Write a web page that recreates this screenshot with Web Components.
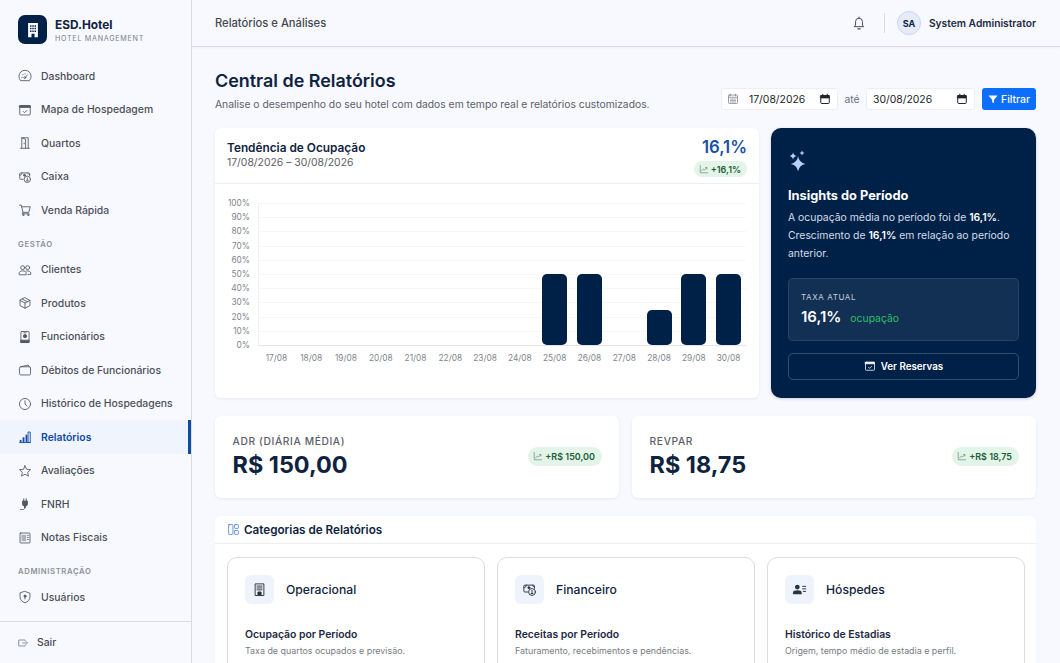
<!DOCTYPE html>
<html lang="pt-BR">
<head>
<meta charset="utf-8">
<title>ESD.Hotel - Relatórios</title>
<style>
  html, body { margin: 0; height: 100%; overflow: hidden; }
  body { font-family: Inter, "Liberation Sans", sans-serif; background: #f8f9ff; color: #0f2340; }
</style>
</head>
<body>
<app-shell>
  <app-sidebar slot="side">
    <nav-item icon="speed">Dashboard</nav-item>
    <nav-item icon="event">Mapa de Hospedagem</nav-item>
    <nav-item icon="door">Quartos</nav-item>
    <nav-item icon="cash">Caixa</nav-item>
    <nav-item icon="cart">Venda Rápida</nav-item>
    <nav-label>GESTÃO</nav-label>
    <nav-item icon="group">Clientes</nav-item>
    <nav-item icon="box">Produtos</nav-item>
    <nav-item icon="badge">Funcionários</nav-item>
    <nav-item icon="folder">Débitos de Funcionários</nav-item>
    <nav-item icon="clock">Histórico de Hospedagens</nav-item>
    <nav-item icon="bars" active>Relatórios</nav-item>
    <nav-item icon="star">Avaliações</nav-item>
    <nav-item icon="plug">FNRH</nav-item>
    <nav-item icon="news">Notas Fiscais</nav-item>
    <nav-label>ADMINISTRAÇÃO</nav-label>
    <nav-item icon="shield">Usuários</nav-item>
  </app-sidebar>
  <app-topbar slot="top"></app-topbar>
  <page-heading></page-heading>
  <section class="row" style="display:grid;grid-template-columns:1fr 265px;gap:12px;height:270px;margin-top:18px">
    <occupancy-chart></occupancy-chart>
    <insight-card></insight-card>
  </section>
  <section class="row" style="display:grid;grid-template-columns:404px 404px;gap:13px;height:82px;margin-top:18px">
    <stat-card label="ADR (DIÁRIA MÉDIA)" value="R$ 150,00" trend="+R$ 150,00"></stat-card>
    <stat-card label="REVPAR" value="R$ 18,75" trend="+R$ 18,75"></stat-card>
  </section>
  <report-categories>
    <category-card icon="building" title="Operacional" item="Ocupação por Período" desc="Taxa de quartos ocupados e previsão."></category-card>
    <category-card icon="cash" title="Financeiro" item="Receitas por Período" desc="Faturamento, recebimentos e pendências."></category-card>
    <category-card icon="guest" title="Hóspedes" item="Histórico de Estadias" desc="Origem, tempo médio de estadia e perfil."></category-card>
  </report-categories>
</app-shell>

<script>
const ICONS = {
  speed: '<path d="M4 19.500a10.500 10.500 0 1 1 16 0z"/><path d="M12.800 13.600l3.400-3"/><circle cx="11.600" cy="14.800" r="1.600"/><path d="M6.800 14.500h.5M8.300 9.800h.5M12 8v.5"/>',
  event: '<rect x="3" y="4.500" width="18" height="16" rx="1.500"/><path d="M3 4.500h18v3H3z" fill="currentColor"/><path d="M9 14.500l2.200 2.200 4-4"/>',
  door: '<path d="M4.500 21h15M6.500 21V3h11v18"/><path d="M6.500 3l6.500 2.500V21"/><path d="M10.500 12v1.500"/>',
  cash: '<path d="M9 16H4.500A1.500 1.500 0 0 1 3 14.500v-8A1.500 1.500 0 0 1 4.500 5h14A1.500 1.500 0 0 1 20 6.500V10"/><path d="M3 9c2.500 0 4-1.500 4-4M20 8c-1.500 0-3-1-3-3" /><circle cx="11" cy="9" r="1.600" fill="currentColor"/><circle cx="16" cy="16" r="5.500"/><path d="M16 13.500v5M14.500 18.500h3"/>',
  cart: '<path d="M2.500 3.500h3l3 12.500h10l2.500-9.500H6.500"/><path d="M8.500 16l-1.500 2.500h12"/><circle cx="9" cy="20.500" r="1.200"/><circle cx="17.500" cy="20.500" r="1.200"/>',
  group: '<circle cx="8" cy="8" r="3.400"/><circle cx="16.500" cy="8" r="3.400"/><path d="M2 19.500v-2c0-2.500 2.500-4 6-4s6 1.500 6 4v2zM14 13.600c4-.6 8 .9 8 3.900v2h-5"/>',
  box: '<path d="M12 3l8.500 4.500v9L12 21l-8.500-4.500v-9z"/><path d="M3.500 7.500L12 12l8.500-4.500M12 12v9M7.500 5.300l8.500 4.500"/>',
  badge: '<rect x="5" y="2.500" width="14" height="19" rx="1"/><path d="M5 17.500h14v4H5z" fill="currentColor"/><circle cx="12" cy="10.500" r="2.800" fill="currentColor"/><path d="M10 4.800h4"/>',
  folder: '<path d="M2.500 8.500A2 2 0 0 1 4.500 6.500h15a2 2 0 0 1 2 2v10a2 2 0 0 1-2 2h-15a2 2 0 0 1-2-2z"/><path d="M4.500 6.500l13-3 2 3"/>',
  clock: '<circle cx="12" cy="12" r="9.500"/><path d="M12 6.500V12l3.800 3.600"/>',
  bars: '<g fill="currentColor" stroke="none"><rect x="3" y="17" width="3" height="4.500"/><rect x="8" y="12.500" width="3" height="9"/><rect x="13" y="8" width="3" height="13.500"/></g><path d="M18 3.500h3v18h-3z" /><path d="M3 21.500h18"/>',
  star: '<path d="M12 3l2.800 6 6.700.8-4.900 4.500 1.300 6.500L12 17.500 6.100 20.800l1.300-6.500L2.500 9.800 9.200 9z"/>',
  plug: '<path fill="currentColor" stroke="none" d="M9 2.500h1.800v4h2.400v-4H15v4h2v5.500c0 2-1.500 3.500-3.500 3.800V19h-3.200v-3.200C8.500 15.500 7 14 7 12V6.500h2z"/><path d="M11.800 18.500c0 2-1.500 3-3.500 3H4.500"/>',
  news: '<rect x="3.500" y="3.500" width="17" height="17" rx="1"/><rect x="6" y="6.500" width="8" height="11" fill="currentColor" fill-opacity=".45" stroke="none"/><path d="M16 7.500h2M16 11h2M16 14.500h2" stroke-width="1.200"/>',
  shield: '<path d="M12 2.500l8.500 3v6c0 5-3.500 8.800-8.500 10.500-5-1.700-8.500-5.500-8.500-10.500v-6z"/><circle cx="12" cy="10.500" r="1.800" fill="currentColor"/><path d="M12 11.500v4"/>',
  logout: '<path d="M15 6H3.500v12H15"/><path d="M15 6l6 6-6 6"/><path d="M11 12h7"/>',
  bell: '<path d="M5 17.500h14l-1.800-2.500V10a5.200 5.200 0 0 0-10.400 0v5z"/><path d="M12 3v1.500"/><path d="M10.300 20.800h3.400" stroke-width="2"/>',
  calendar: '<rect x="3.500" y="5" width="17" height="16" rx="1.500" stroke-width="2"/><path d="M3.500 5h17v5h-17z" fill="currentColor"/><path d="M7.500 2.500V5M16.500 2.500V5" stroke-width="2"/>',
  calgrid: '<rect x="3" y="4" width="18" height="17" rx="1.500"/><path d="M3 8.500h18M7 2.500v3M17 2.500v3M7 12h2M11 12h2M15 12h2M7 15h2M11 15h2M15 15h2M7 18h2M11 18h2M15 18h2"/>',
  funnel: '<path fill="currentColor" stroke="none" d="M2.500 3.500h19a.8.8 0 0 1 .6 1.300L14.500 14v6.500a1 1 0 0 1-1.500.900l-2.500-1.500a1 1 0 0 1-.5-.900V14L1.900 4.800a.8.8 0 0 1 .6-1.300z"/>',
  trend: '<path d="M3 3.500V21h18"/><path d="M6.500 16.500l4-4.500 3 2.500 5-5.500"/><path d="M15.500 8.500h3.500V12"/>',
  sparkle: '<g fill="currentColor" stroke="none"><path d="M11 8Q12.200 15.200 19 16.400 12.200 17.600 11 24.500 9.800 17.600 3 16.400 9.800 15.200 11 8z"/><path d="M5.500 3.600Q6 7.100 9.400 7.600 6 8.100 5.500 11.600 5 8.100 1.600 7.600 5 7.100 5.500 3.600z"/><path d="M15.300 1.600Q15.700 4 18 4.400 15.700 4.800 15.300 7.200 14.900 4.800 12.600 4.400 14.900 4 15.300 1.600z"/></g>',
  panels: '<rect x="3" y="3" width="8" height="18" rx="1"/><rect x="14" y="3" width="7" height="7" rx="1"/><rect x="14" y="14" width="7" height="7" rx="1"/>',
  building: '<path d="M5 21V3h14v18z"/><path d="M8 6.500h2M11 6.500h2M14 6.500h2M8 9.500h2M11 9.500h2M14 9.500h2M8 12.500h2M11 12.500h2M14 12.500h2"/><path d="M9.500 21v-5h5v5" fill="currentColor"/>',
  guest: '<circle cx="8.500" cy="8" r="3.800" fill="currentColor" stroke="none"/><path fill="currentColor" stroke="none" d="M1.500 19.500V17c0-2.500 3-3.800 7-3.800s7 1.300 7 3.800v2.500z"/><path d="M17 7h5M17 11h5M18 15h4"/>',
  logo: '<path fill="currentColor" stroke="none" fill-rule="evenodd" d="M5.500 2.500h13v19h-4.500v-4.500h-4V21.500H5.500zM8 5.500v2h2v-2zM11 5.500v2h2v-2zM14 5.500v2h2v-2zM8 9v2h2V9zM11 9v2h2V9zM14 9v2h2V9zM8 12.500v2h2v-2zM11 12.500v2h2v-2zM14 12.500v2h2v-2z"/>'
};

class AppIcon extends HTMLElement {
  connectedCallback() {
    const size = this.getAttribute("size") || 16;
    const stroke = this.getAttribute("stroke") || 1.5;
    this.attachShadow({ mode: "open" }).innerHTML = `
      <style>:host{display:inline-flex;flex:none} svg{display:block}</style>
      <svg width="${size}" height="${size}" viewBox="0 0 24 24" fill="none" stroke="currentColor"
        stroke-width="${stroke}" stroke-linecap="round" stroke-linejoin="round">${ICONS[this.getAttribute("name")] || ""}</svg>`;
  }
}

class AppShell extends HTMLElement {
  constructor() {
    super();
    this.attachShadow({ mode: "open" }).innerHTML = `
    <style>
      :host{display:grid;grid-template-columns:192px 1fr;height:663px;overflow:hidden}
      main{display:flex;flex-direction:column;min-width:0;height:663px;overflow:hidden}
      #content{padding:0 24px 0 23px;display:flex;flex-direction:column}
    </style>
    <slot name="side"></slot>
    <main>
      <slot name="top"></slot>
      <div id="content"><slot></slot></div>
    </main>`;
  }
}

class AppSidebar extends HTMLElement {
  constructor() {
    super();
    this.attachShadow({ mode: "open" }).innerHTML = `
    <style>
      :host{display:flex;flex-direction:column;height:663px;background:#f8f9ff;border-right:1px solid #d9dce3;box-sizing:border-box}
      #brand{height:59.25px;flex:none;display:flex;align-items:flex-start;gap:8px;padding:15px 0 0 18px;box-sizing:border-box}
      #logo{width:29px;height:29px;border-radius:7px;background:#002147;color:#fff;display:flex;align-items:center;justify-content:center}
      b{display:block;font-size:11.84px;font-weight:700;color:#0f2340;line-height:16px;margin-top:2px}
      small{display:block;font-size:7.2px;letter-spacing:.7px;color:#7b818c;line-height:10px;margin-top:1px}
      nav{flex:1;min-height:0;overflow:hidden}
      footer{height:42px;flex:none;border-top:1px solid #d9dce3;display:flex;align-items:center;gap:8px;padding-left:17px;box-sizing:border-box;font-size:10.4px;font-weight:500;color:#43474e}
      footer app-icon{color:#6f747d}
    </style>
    <div id="brand">
      <div id="logo"><app-icon name="logo" size="18"></app-icon></div>
      <div><b>ESD.Hotel</b><small>HOTEL MANAGEMENT</small></div>
    </div>
    <nav><slot></slot></nav>
    <footer><app-icon name="logout" size="12"></app-icon>Sair</footer>`;
  }
}

class NavItem extends HTMLElement {
  connectedCallback() {
    this.attachShadow({ mode: "open" }).innerHTML = `
    <style>
      :host{display:flex;align-items:center;gap:9px;height:33.5px;padding-left:18px;box-sizing:border-box;font-size:10.4px;font-weight:500;color:#4b4f57;position:relative}
      :host([active]){background:#f0f4fd;color:#0f4ba6;font-weight:600;border-right:3px solid #0f4ba6}
      app-icon{color:#555a62;width:14px;justify-content:center}
      :host([active]) app-icon{color:#0f4ba6}
    </style>
    <app-icon name="${this.getAttribute("icon")}" size="14"></app-icon><slot></slot>`;
  }
}

class NavLabel extends HTMLElement {
  constructor() {
    super();
    this.attachShadow({ mode: "open" }).innerHTML = `
    <style>:host{display:flex;align-items:center;height:26px;padding:9px 0 0 18px;box-sizing:border-box;font-size:7.7px;font-weight:600;letter-spacing:.62px;color:#8b9099}</style>
    <slot></slot>`;
  }
}

class AppTopbar extends HTMLElement {
  constructor() {
    super();
    this.attachShadow({ mode: "open" }).innerHTML = `
    <style>
      :host{display:flex;align-items:center;height:47px;flex:none;box-sizing:border-box;padding:0 24px 0 23px;background:#f8f9ff;border-bottom:1px solid #d9dce3;box-shadow:0 1px 2px rgba(0,0,0,.04)}
      h2{flex:1;margin:0;font-size:11.2px;font-weight:500;color:#43474e}
      app-icon{color:#4b4f57;margin-right:17px}
      i{width:1px;height:20px;background:#d9dce3;margin-right:12px}
      #avatar{width:24px;height:24px;box-sizing:border-box;border-radius:50%;background:#e5ebfa;border:1px solid #cbd5ec;display:flex;align-items:center;justify-content:center;font-size:9px;font-weight:700;color:#0f2340;margin-right:8px}
      span{font-size:10.24px;font-weight:600;color:#1d2a3f}
    </style>
    <h2>Relatórios e Análises</h2>
    <app-icon name="bell" size="16"></app-icon><i></i>
    <div id="avatar">SA</div><span>System Administrator</span>`;
  }
}

class DateField extends HTMLElement {
  connectedCallback() {
    const lead = this.hasAttribute("lead");
    this.attachShadow({ mode: "open" }).innerHTML = `
    <style>
      :host{display:flex;align-items:center;height:22px;box-sizing:border-box;background:#fff;border:1px solid #eceef3;border-radius:3px;padding:0 6px 0 ${lead ? 5 : 6}px;font-size:10.4px;color:#212529}
      #lead{color:#7d8289;margin-right:10px}
      span{flex:1}
    </style>
    ${lead ? '<app-icon id="lead" name="calgrid" size="12"></app-icon>' : ""}
    <span>${this.getAttribute("value")}</span>
    <app-icon name="calendar" size="12" stroke="1.400"></app-icon>`;
  }
}

class PageHeading extends HTMLElement {
  constructor() {
    super();
    this.attachShadow({ mode: "open" }).innerHTML = `
    <style>
      :host{display:flex;justify-content:space-between;align-items:flex-end;height:63px;box-sizing:border-box}
      #title{margin-bottom:-1px}
      h1{margin:0;font-size:17.92px;line-height:24px;font-weight:600;color:#0f2340}
      p{margin:3px 0 0;font-size:10.32px;line-height:16px;color:#5c6068}
      #title{margin-bottom:-2px}
      #filter{display:flex;align-items:center;font-size:10.4px;color:#6d7178}
      date-field:first-child{width:117px}
      date-field:nth-child(3){width:109px}
      em{font-style:normal;width:28px;text-align:center}
      button{all:unset;box-sizing:border-box;display:flex;align-items:center;justify-content:center;gap:3px;width:54px;height:22px;margin-left:7px;background:#0d6efd;color:#fff;border-radius:3px;font-size:10.4px;font-weight:500}
    </style>
    <div id="title">
      <h1>Central de Relatórios</h1>
      <p>Analise o desempenho do seu hotel com dados em tempo real e relatórios customizados.</p>
    </div>
    <div id="filter">
      <date-field lead value="17/08/2026"></date-field>
      <em>até</em>
      <date-field value="30/08/2026"></date-field>
      <button><app-icon name="funnel" size="10"></app-icon>Filtrar</button>
    </div>`;
  }
}

class TrendPill extends HTMLElement {
  constructor() {
    super();
    this.attachShadow({ mode: "open" }).innerHTML = `
    <style>
      :host{display:inline-flex;align-items:center;gap:2px;height:var(--pill-h,16px);padding:0 var(--pill-r,6px) 0 5px;border-radius:10px;background:#e3f5e8;color:#1c5c38;font-size:9px;font-weight:600;white-space:nowrap}
      app-icon{color:#5f7f6c}
    </style>
    <app-icon name="trend" size="10"></app-icon><slot></slot>`;
  }
}

class OccupancyChart extends HTMLElement {
  constructor() {
    super();
    const days = ["17/08","18/08","19/08","20/08","21/08","22/08","23/08","24/08","25/08","26/08","27/08","28/08","29/08","30/08"];
    const values = [0,0,0,0,0,0,0,0,50,50,0,25,50,50];
    const ticks = [100,90,80,70,60,50,40,30,20,10,0];
    this.attachShadow({ mode: "open" }).innerHTML = `
    <style>
      :host{display:block;background:#fff;border-radius:6px;box-shadow:0 1px 3px rgba(15,35,64,.08);overflow:hidden}
      header{height:56px;box-sizing:border-box;border-bottom:1px solid #eceef2;padding:6px 12px 0;display:flex;justify-content:space-between}
      h3{margin:0;font-size:11.84px;line-height:16px;font-weight:600;color:#0f2340;margin-top:6px}
      small{display:block;font-size:10.4px;line-height:14px;color:#5c6068;margin-top:0}
      #total{display:flex;flex-direction:column;align-items:flex-end;gap:3px;margin-top:2px}
      strong{font-size:16.8px;line-height:22px;font-weight:600;color:#1a4fa3}
      #body{display:grid;grid-template-columns:23px 1fr;column-gap:8px;padding:19px 13px 0 12px}
      #y{display:flex;flex-direction:column;justify-content:space-between;height:142px;font-size:8.32px;color:#80858d;text-align:right}
      #y span{height:0;line-height:0;white-space:nowrap;direction:rtl}
      #plot{height:142px;display:grid;grid-template-columns:repeat(14,1fr);align-items:end;border-left:1px solid #eef0f3;border-bottom:1px solid #e3e5ea;box-sizing:content-box;
        background:repeating-linear-gradient(to bottom,#f6f7f9 0,#f6f7f9 1px,transparent 1px,transparent 14.2px)}
      #plot div{height:0;width:25px;justify-self:center;background:#002147;border-radius:5px}
      #x{grid-column:2;display:grid;grid-template-columns:repeat(14,1fr);padding-left:1px;font-size:8.32px;color:#80858d;text-align:center;margin-top:7px;line-height:11px}
    </style>
    <header>
      <div><h3>Tendência de Ocupação</h3><small>17/08/2026 – 30/08/2026</small></div>
      <div id="total"><strong>16,1%</strong><trend-pill>+16,1%</trend-pill></div>
    </header>
    <div id="body">
      <div id="y">${ticks.map(t => `<span>${t}%</span>`).join("")}</div>
      <div id="plot">${values.map(v => `<div style="height:${v}%"></div>`).join("")}</div>
      <div id="x">${days.map(d => `<span>${d}</span>`).join("")}</div>
    </div>`;
  }
}

class InsightCard extends HTMLElement {
  constructor() {
    super();
    this.attachShadow({ mode: "open" }).innerHTML = `
    <style>
      :host{display:flex;flex-direction:column;background:#002147;border-radius:10px;padding:21px 17px 18px;box-sizing:border-box;color:#fff;box-shadow:0 1px 3px rgba(15,35,64,.2)}
      #spark{color:#b8d0f8}
      h3{margin:17px 0 0;font-size:12.8px;line-height:16px;font-weight:700}
      p{margin:5px 0 0;font-size:10.4px;line-height:17.9px;color:#d5dde8}
      p span{display:block;white-space:nowrap}
      p b{color:#fff;font-weight:600}
      #rate{margin-top:15px;height:63px;box-sizing:border-box;padding:13px 12px 0;border:1px solid rgba(255,255,255,.09);border-radius:5px;background:rgba(255,255,255,.07)}
      small{display:block;font-size:8px;line-height:11px;letter-spacing:.6px;color:#c4ccd8}
      #val{display:flex;align-items:baseline;gap:9px;margin-top:3px}
      strong{font-size:15px;line-height:22px;font-weight:600}
      em{font-style:normal;font-size:10.4px;color:#2fbf64}
      #btn{margin-top:12px;height:27px;box-sizing:border-box;display:flex;align-items:center;justify-content:center;gap:5px;border:1px solid rgba(255,255,255,.2);border-radius:5px;font-size:9.76px;font-weight:600}
    </style>
    <app-icon id="spark" name="sparkle" size="22"></app-icon>
    <h3>Insights do Período</h3>
    <p><span>A ocupação média no período foi de <b>16,1%</b>.</span><span>Crescimento de <b>16,1%</b> em relação ao período</span><span>anterior.</span></p>
    <div id="rate">
      <small>TAXA ATUAL</small>
      <div id="val"><strong>16,1%</strong><em>ocupação</em></div>
    </div>
    <div id="btn"><app-icon name="event" size="12"></app-icon>Ver Reservas</div>`;
  }
}

class StatCard extends HTMLElement {
  connectedCallback() {
    this.attachShadow({ mode: "open" }).innerHTML = `
    <style>
      :host{display:flex;align-items:center;justify-content:space-between;background:#fff;border-radius:6px;padding:0 17px 0 17.6px;box-sizing:border-box;box-shadow:0 1px 3px rgba(15,35,64,.08);--pill-h:19px;--pill-r:7px}
      small{display:block;font-size:10.24px;line-height:13px;font-weight:500;letter-spacing:.62px;color:#5c6068}
      strong{display:block;margin-top:1px;font-size:23.4px;line-height:31px;font-weight:700;color:#0f2340}
      trend-pill{margin-top:-2px}
    </style>
    <div><small>${this.getAttribute("label")}</small><strong>${this.getAttribute("value")}</strong></div>
    <trend-pill>${this.getAttribute("trend")}</trend-pill>`;
  }
}

class ReportCategories extends HTMLElement {
  constructor() {
    super();
    this.attachShadow({ mode: "open" }).innerHTML = `
    <style>
      :host{display:block;margin-top:18px;background:#fff;border-radius:6px 6px 0 0}
      header{height:28px;box-sizing:border-box;display:flex;align-items:center;gap:4px;padding:0 12px;border-bottom:1px solid #eceef2;font-size:11.68px;font-weight:600;color:#0f2340}
      app-icon{color:#4d7fd6}
      #grid{display:grid;grid-template-columns:repeat(3,258px);gap:12px;padding:13px 12px}
    </style>
    <header><app-icon name="panels" size="13"></app-icon>Categorias de Relatórios</header>
    <div id="grid"><slot></slot></div>`;
  }
}

class CategoryCard extends HTMLElement {
  connectedCallback() {
    this.attachShadow({ mode: "open" }).innerHTML = `
    <style>
      :host{display:block;height:140px;box-sizing:border-box;border:1px solid #d9dce3;border-radius:10px;padding:17px}
      #head{display:flex;align-items:center;gap:12px;font-size:12.16px;font-weight:500;color:#0f2340}
      #box{width:29px;height:29px;border-radius:6px;background:#eff3fc;display:flex;align-items:center;justify-content:center;color:#2b3442}
      b{display:block;margin-top:24px;font-size:10.4px;line-height:14px;font-weight:600;color:#1d2a3f}
      small{display:block;margin-top:3px;font-size:8.88px;line-height:12px;color:#777c84}
    </style>
    <div id="head"><div id="box"><app-icon name="${this.getAttribute("icon")}" size="15"></app-icon></div>${this.getAttribute("title")}</div>
    <b>${this.getAttribute("item")}</b>
    <small>${this.getAttribute("desc")}</small>`;
  }
}

customElements.define("app-icon", AppIcon);
customElements.define("app-shell", AppShell);
customElements.define("app-sidebar", AppSidebar);
customElements.define("nav-item", NavItem);
customElements.define("nav-label", NavLabel);
customElements.define("app-topbar", AppTopbar);
customElements.define("date-field", DateField);
customElements.define("page-heading", PageHeading);
customElements.define("trend-pill", TrendPill);
customElements.define("occupancy-chart", OccupancyChart);
customElements.define("insight-card", InsightCard);
customElements.define("stat-card", StatCard);
customElements.define("report-categories", ReportCategories);
customElements.define("category-card", CategoryCard);
</script>
</body>
</html>
